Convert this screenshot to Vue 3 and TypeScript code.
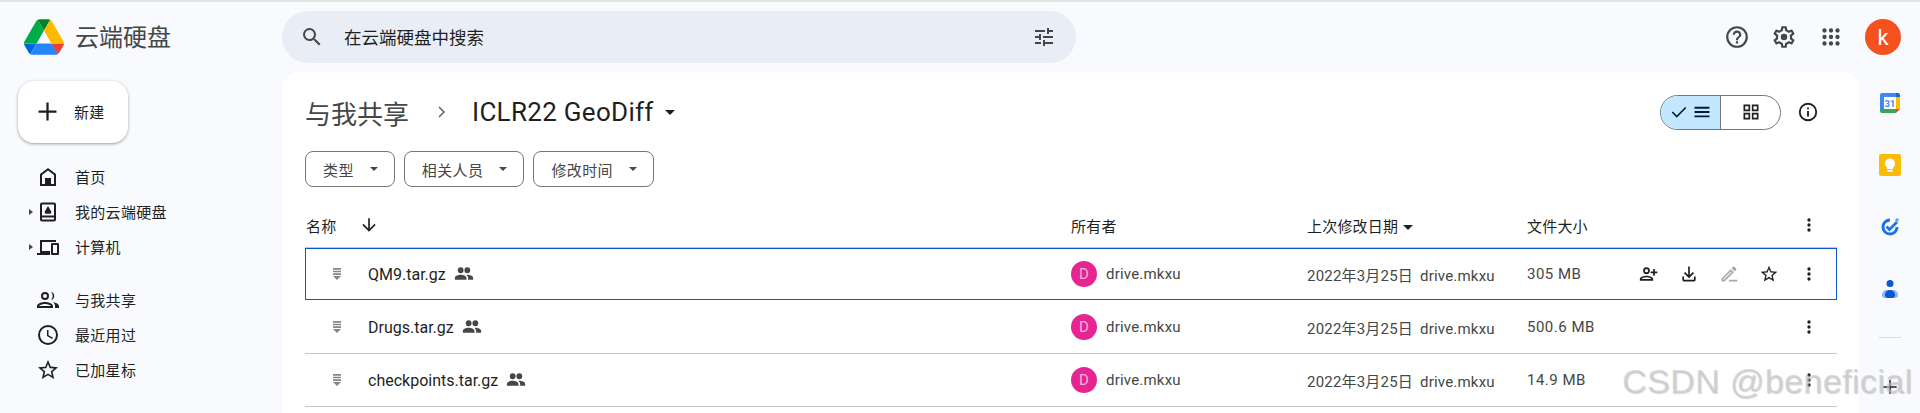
<script setup lang="ts">
const navTop = [
  { label: "首页", icon: "home", arrow: false },
  { label: "我的云端硬盘", icon: "drive", arrow: true },
  { label: "计算机", icon: "computer", arrow: true },
]
const navBottom = [
  { label: "与我共享", icon: "people" },
  { label: "最近用过", icon: "clock" },
  { label: "已加星标", icon: "star" },
]
const filters = ["类型", "相关人员", "修改时间"]
const files = [
  { name: "QM9.tar.gz", size: "305 MB", active: true },
  { name: "Drugs.tar.gz", size: "500.6 MB", active: false },
  { name: "checkpoints.tar.gz", size: "14.9 MB", active: false },
]
const paths: Record<string, string> = {
  home: "M12 3 4 9v12h16V9l-8-6zm6 16h-3v-6H9v6H6v-9l6-4.500 6 4.500v9z",
  drive: "M6 2.500h12a2 2 0 0 1 2 2v15a2 2 0 0 1-2 2H6a2 2 0 0 1-2-2v-15a2 2 0 0 1 2-2zM6 4.500v11h12v-11H6zM6 17.500v2h12v-2H6zM12 6l-3.500 6 1 1.700h5l1-1.700L12 6z",
  computer: "M4 5h16v2H6v9h8v4H1v-2h3V5zm12 3h6a1 1 0 0 1 1 1v10a1 1 0 0 1-1 1h-6a1 1 0 0 1-1-1V9a1 1 0 0 1 1-1zm1 2v8h4v-8h-4z",
  people: "M9 12a4 4 0 1 0 0-8 4 4 0 0 0 0 8zm0-6a2 2 0 1 1 0 4 2 2 0 0 1 0-4zm0 8c-2.700 0-8 1.300-8 4v2h16v-2c0-2.700-5.300-4-8-4zm-6 4c.2-.7 3.300-2 6-2s5.800 1.300 6 2H3zm12.100-13.900a4 4 0 0 1 0 7.800A6 6 0 0 0 15.100 4.100zM17 14c2 .6 6 1.700 6 4v2h-4v-2c0-1.600-.8-3-2-4z",
  clock: "M12 2a10 10 0 1 0 0 20 10 10 0 0 0 0-20zm0 18a8 8 0 1 1 0-16 8 8 0 0 1 0 16zm.5-13H11v6l5.200 3.100.8-1.300-4.500-2.600V7z",
  star: "M22 9.240l-7.190-.62L12 2 9.190 8.630 2 9.240l5.460 4.730L5.820 21 12 17.270 18.180 21l-1.630-7.030L22 9.240zM12 15.400l-3.760 2.270 1-4.280-3.320-2.880 4.380-.38L12 6.100l1.710 4.040 4.380.38-3.320 2.880 1 4.280L12 15.400z",
  addPerson: "M9 12a4 4 0 1 0 0-8 4 4 0 0 0 0 8zm0-6a2 2 0 1 1 0 4 2 2 0 0 1 0-4zm0 8c-2.700 0-8 1.300-8 4v2h16v-2c0-2.700-5.300-4-8-4zm-6 4c.2-.7 3.300-2 6-2s5.800 1.300 6 2H3zM19 9V6h-2v3h-3v2h3v3h2v-3h3V9h-3z",
  download: "M13 3h-2v10.200L7.400 9.600 6 11l6 6 6-6-1.400-1.400-3.600 3.600V3zM4 15v4a2 2 0 0 0 2 2h12a2 2 0 0 0 2-2v-4h-2v4H6v-4H4z",
  pencil: "M3 17.250V21h3.750L17.810 9.940l-3.750-3.750L3 17.250zM5.920 19H5v-.92l9.060-9.060.92.92L5.920 19zM20.710 7.040a1 1 0 0 0 0-1.410l-2.340-2.340a1 1 0 0 0-1.410 0l-1.830 1.830 3.750 3.750 1.830-1.830zM13 19h9v2h-11z",
  more: "M12 8a2 2 0 1 0 0-4 2 2 0 0 0 0 4zm0 2a2 2 0 1 0 0 4 2 2 0 0 0 0-4zm0 6a2 2 0 1 0 0 4 2 2 0 0 0 0-4z",
  shared: "M16 11a3.500 3.500 0 1 0 0-7 3.500 3.500 0 0 0 0 7zM8 11a3.500 3.500 0 1 0 0-7 3.500 3.500 0 0 0 0 7zm0 2c-2.700 0-7 1.300-7 4v2h14v-2c0-2.700-4.300-4-7-4zm8 0c-.3 0-.7 0-1.100.1 1.300.9 2.100 2.200 2.100 3.900v2h6v-2c0-2.700-4.300-4-7-4z",
  zipped: "M6 3h12v2.500H6V3zm0 4h12v2.500H6V7zm0 4h12v2.500H6V11zm0 4h12l-6 6-6-6z",
}
</script>

<template>
  <div class="page">
    <header class="topbar">
      <div class="brand">
        <svg class="drive-logo" viewBox="0 0 87.300 78" width="40" height="36">
          <path d="m6.600 66.850 3.850 6.650c.8 1.400 1.950 2.500 3.300 3.300l13.750-23.800H0c0 1.550.4 3.100 1.200 4.500z" fill="#0066da" />
          <path d="M43.650 25 29.900 1.200c-1.350.8-2.500 1.900-3.300 3.300L1.200 48.500A9 9 0 0 0 0 53h27.500z" fill="#00ac47" />
          <path d="M73.550 76.800c1.350-.8 2.500-1.900 3.300-3.300l1.600-2.750L86.100 57.500c.8-1.400 1.200-2.950 1.200-4.500H59.800l5.850 11.500z" fill="#ea4335" />
          <path d="M43.650 25 57.400 1.200C56.050.4 54.500 0 52.900 0H34.400c-1.600 0-3.150.45-4.500 1.200z" fill="#00832d" />
          <path d="M59.800 53H27.500L13.750 76.800c1.350.8 2.900 1.200 4.500 1.200h50.800c1.600 0 3.150-.45 4.500-1.200z" fill="#2684fc" />
          <path d="M73.400 26.500 60.700 4.500c-.8-1.400-1.950-2.500-3.300-3.300L43.650 25 59.800 53h27.450c0-1.550-.4-3.100-1.200-4.500z" fill="#ffba00" />
        </svg>
        <span class="brand-name">云端硬盘</span>
      </div>
      <div class="search">
        <svg viewBox="0 0 24 24" width="24" height="24"><path d="M15.500 14h-.79l-.28-.27A6.470 6.470 0 0 0 16 9.500 6.500 6.500 0 1 0 9.500 16c1.610 0 3.090-.59 4.230-1.570l.27.28v.79l5 4.990L20.490 19l-4.990-5zm-6 0C7.010 14 5 11.990 5 9.500S7.010 5 9.500 5 14 7.010 14 9.500 11.990 14 9.500 14z" /></svg>
        <span class="search-text">在云端硬盘中搜索</span>
        <svg viewBox="0 0 24 24" width="24" height="24"><path d="M3 17v2h6v-2H3zM3 5v2h10V5H3zm10 16v-2h8v-2h-8v-2h-2v6h2zM7 9v2H3v2h4v2h2V9H7zm14 4v-2H11v2h10zm-6-4h2V7h4V5h-4V3h-2v6z" /></svg>
      </div>
      <div class="top-actions">
        <svg viewBox="0 0 24 24"><path d="M11 18h2v-2h-2v2zm1-16a10 10 0 1 0 0 20 10 10 0 0 0 0-20zm0 18a8 8 0 1 1 0-16 8 8 0 0 1 0 16zm0-14a4 4 0 0 0-4 4h2a2 2 0 1 1 4 0c0 2-3 1.750-3 5h2c0-2.250 3-2.500 3-5a4 4 0 0 0-4-4z" /></svg>
        <svg viewBox="0 0 24 24"><path d="M19.430 12.980c.04-.32.07-.64.07-.98 0-.34-.03-.66-.07-.98l2.110-1.650c.19-.15.24-.42.12-.64l-2-3.460a.5.5 0 0 0-.61-.22l-2.490 1c-.52-.4-1.080-.73-1.690-.98l-.38-2.650A.488.488 0 0 0 14 2h-4c-.25 0-.46.18-.49.42l-.38 2.650c-.61.25-1.170.59-1.690.98l-2.490-1a.566.566 0 0 0-.18-.03c-.17 0-.34.09-.43.25l-2 3.460c-.13.22-.07.49.12.64l2.110 1.650c-.04.32-.07.65-.07.98 0 .33.03.66.07.98l-2.110 1.650c-.19.15-.24.42-.12.64l2 3.460a.5.5 0 0 0 .61.22l2.490-1c.52.4 1.080.73 1.690.98l.38 2.650c.03.24.24.42.49.42h4c.25 0 .46-.18.49-.42l.38-2.650c.61-.25 1.170-.59 1.690-.98l2.490 1c.06.02.12.03.18.03.17 0 .34-.09.43-.25l2-3.460c.12-.22.07-.49-.12-.64l-2.110-1.650zm-1.980-1.710c.04.31.05.52.05.73 0 .21-.02.43-.05.73l-.14 1.130.89.7 1.080.84-.7 1.210-1.270-.51-1.040-.42-.9.68c-.43.32-.84.56-1.250.73l-1.060.43-.16 1.130-.2 1.350h-1.400l-.19-1.350-.16-1.130-1.060-.43c-.43-.18-.83-.41-1.230-.71l-.91-.7-1.060.43-1.270.51-.7-1.210 1.080-.84.89-.7-.14-1.130c-.03-.31-.05-.54-.05-.74s.02-.43.05-.73l.14-1.130-.89-.7-1.080-.84.7-1.210 1.270.51 1.040.42.9-.68c.43-.32.84-.56 1.250-.73l1.060-.43.16-1.130.2-1.350h1.390l.19 1.350.16 1.130 1.060.43c.43.18.83.41 1.230.71l.91.7 1.060-.43 1.270-.51.7 1.210-1.070.85-.89.7.14 1.130z" /><circle cx="12" cy="12" r="3" /></svg>
        <svg viewBox="0 0 24 24"><path d="M6 8a2 2 0 1 0 0-4 2 2 0 0 0 0 4zm6 0a2 2 0 1 0 0-4 2 2 0 0 0 0 4zm6 0a2 2 0 1 0 0-4 2 2 0 0 0 0 4zM6 14a2 2 0 1 0 0-4 2 2 0 0 0 0 4zm6 0a2 2 0 1 0 0-4 2 2 0 0 0 0 4zm6 0a2 2 0 1 0 0-4 2 2 0 0 0 0 4zM6 20a2 2 0 1 0 0-4 2 2 0 0 0 0 4zm6 0a2 2 0 1 0 0-4 2 2 0 0 0 0 4zm6 0a2 2 0 1 0 0-4 2 2 0 0 0 0 4z" /></svg>
        <span class="avatar">k</span>
      </div>
    </header>

    <div class="body">
      <aside class="sidebar">
        <button type="button" class="new-btn">
          <svg viewBox="0 0 24 24" width="27" height="27"><path d="M20 13h-7v7h-2v-7H4v-2h7V4h2v7h7v2z" /></svg>
          <span>新建</span>
        </button>
        <nav class="nav">
          <div v-for="item in navTop" :key="item.label" class="nav-item">
            <span class="nav-arrow" :class="{ shown: item.arrow }"></span>
            <svg viewBox="0 0 24 24" width="24" height="24"><path :d="paths[item.icon]" fill-rule="evenodd" /></svg>
            <span>{{ item.label }}</span>
          </div>
        </nav>
        <nav class="nav second">
          <div v-for="item in navBottom" :key="item.label" class="nav-item">
            <span class="nav-arrow"></span>
            <svg viewBox="0 0 24 24" width="24" height="24"><path :d="paths[item.icon]" /></svg>
            <span>{{ item.label }}</span>
          </div>
        </nav>
      </aside>

      <main class="panel">
        <div class="title-row">
          <span class="crumb">与我共享</span>
          <svg class="crumb-sep" viewBox="0 0 24 24" width="24" height="24"><path d="M10 7l5 5-5 5" fill="none" stroke="#5f6368" stroke-width="1.500" /></svg>
          <span class="folder">ICLR22 GeoDiff</span>
          <span class="caret folder-caret"></span>
          <div class="view-tools">
            <div class="view-toggle">
              <span class="view-list">
                <svg viewBox="0 0 24 24" width="18" height="18"><path d="M3 12l6 6L21 6" fill="none" stroke="#001d35" stroke-width="2.200" /></svg>
                <svg viewBox="0 0 24 24" width="18" height="18"><path d="M2 5h20v2.500H2zM2 10.800h20v2.500H2zM2 16.500h20V19H2z" fill="#001d35" /></svg>
              </span>
              <span class="view-grid">
                <svg viewBox="0 0 24 24" width="20" height="20"><path d="M3 3h8v8H3V3zm2 2v4h4V5H5zm8-2h8v8h-8V3zm2 2v4h4V5h-4zM3 13h8v8H3v-8zm2 2v4h4v-4H5zm8-2h8v8h-8v-8zm2 2v4h4v-4h-4z" fill-rule="evenodd" /></svg>
              </span>
            </div>
            <svg class="info" viewBox="0 0 24 24" width="22" height="22"><path d="M11 7h2v2h-2V7zm0 4h2v6h-2v-6zm1-9a10 10 0 1 0 0 20 10 10 0 0 0 0-20zm0 18a8 8 0 1 1 0-16 8 8 0 0 1 0 16z" /></svg>
          </div>
        </div>

        <div class="filters">
          <button v-for="f in filters" :key="f" type="button" class="chip">
            <span>{{ f }}</span>
            <span class="caret chip-caret"></span>
          </button>
        </div>

        <div class="table">
          <div class="row head">
            <div class="col-name">
              <span>名称</span>
              <svg class="sort" viewBox="0 0 24 24" width="20" height="20"><path d="M20 12l-1.400-1.400-5.600 5.600V4h-2v12.200l-5.600-5.600L4 12l8 8 8-8z" /></svg>
            </div>
            <div class="col-owner">所有者</div>
            <div class="col-date">上次修改日期<span class="caret head-caret"></span></div>
            <div class="col-size">文件大小</div>
            <div class="col-actions">
              <svg viewBox="0 0 24 24" width="20" height="20"><path :d="paths.more" /></svg>
            </div>
          </div>
          <div v-for="file in files" :key="file.name" class="row file" :class="{ active: file.active }">
            <div class="col-name">
              <svg class="file-icon" viewBox="0 0 24 24" width="16" height="16"><path :d="paths.zipped" /></svg>
              <span class="file-name">{{ file.name }}</span>
              <svg class="shared" viewBox="0 0 24 24" width="20" height="20"><path :d="paths.shared" /></svg>
            </div>
            <div class="col-owner owner">
              <span class="owner-badge">D</span>
              <span>drive.mkxu</span>
            </div>
            <div class="col-date muted">
              <span class="date">2022年3月25日</span>
              <span>drive.mkxu</span>
            </div>
            <div class="col-size muted">{{ file.size }}</div>
            <div class="col-actions">
              <template v-if="file.active">
                <svg viewBox="0 0 24 24" width="20" height="20"><path :d="paths.addPerson" /></svg>
                <svg viewBox="0 0 24 24" width="20" height="20"><path :d="paths.download" /></svg>
                <svg class="disabled" viewBox="0 0 24 24" width="20" height="20"><path :d="paths.pencil" fill-rule="evenodd" /></svg>
                <svg viewBox="0 0 24 24" width="20" height="20"><path :d="paths.star" /></svg>
              </template>
              <svg viewBox="0 0 24 24" width="20" height="20"><path :d="paths.more" /></svg>
            </div>
          </div>
        </div>
      </main>

      <aside class="rail">
        <svg viewBox="0 0 24 24" width="24" height="24">
          <rect x="2" y="2" width="20" height="20" rx="2" fill="#fff" />
          <path d="M2 4a2 2 0 0 1 2-2h14v4H6v12H2z" fill="#4285f4" />
          <path d="M18 2h2a2 2 0 0 1 2 2v2h-4z" fill="#1967d2" />
          <path d="M18 6h4v12h-4z" fill="#fbbc04" />
          <path d="M2 18h16v4H4a2 2 0 0 1-2-2z" fill="#34a853" />
          <path d="M18 18h4l-4 4z" fill="#ea4335" />
          <text x="12" y="15.500" text-anchor="middle" class="cal-text">31</text>
        </svg>
        <svg viewBox="0 0 24 24" width="24" height="24">
          <path d="M3 1h18a2 2 0 0 1 2 2v18a2 2 0 0 1-2 2H3a2 2 0 0 1-2-2V3a2 2 0 0 1 2-2z" fill="#fbbc04" />
          <path d="M12 5.500a5 5 0 0 0-3 9V16h6v-1.500a5 5 0 0 0-3-9zM9.500 17h5v1.800h-5z" fill="#fff" />
        </svg>
        <svg viewBox="0 0 24 24" width="24" height="24">
          <path d="M12 3.500a8.500 8.500 0 1 0 8.500 8.500h-3a5.500 5.500 0 1 1-5.500-5.500z" fill="#1a73e8" />
          <path d="M8.500 11.500 11.500 14.500 19 7" fill="none" stroke="#1a73e8" stroke-width="2.800" />
          <circle cx="19" cy="5" r="1.800" fill="#669df6" />
        </svg>
        <svg viewBox="0 0 24 24" width="24" height="24">
          <circle cx="12" cy="6.500" r="3.500" fill="#0b57d0" />
          <path d="M4 18a5 5 0 0 1 5-5h6a5 5 0 0 1 5 5 3 3 0 0 1-3 3H7a3 3 0 0 1-3-3z" fill="#8ab4f8" />
          <path d="M7 18a5 5 0 0 1 5-5 5 5 0 0 1 5 5 3 3 0 0 1-3 3h-4a3 3 0 0 1-3-3z" fill="#0b57d0" />
        </svg>
        <div class="rail-line"></div>
        <svg class="rail-plus" viewBox="0 0 24 24" width="20" height="20"><path d="M20 13h-7v7h-2v-7H4v-2h7V4h2v7h7v2z" /></svg>
      </aside>
    </div>

    <div class="watermark">CSDN @beneficial</div>
  </div>
</template>

<style>
html,
body {
  margin: 0;
  background: #f8fafd;
  overflow: hidden;
}
</style>

<style scoped>
.page {
  position: relative;
  width: 1920px;
  height: 413px;
  overflow: hidden;
  box-sizing: border-box;
  border-top: 2px solid #e3e3e3;
  background: #f8fafd;
  font-family: Roboto, "Noto Sans CJK SC", sans-serif;
  color: #1f1f1f;
}

svg {
  fill: #444746;
  flex: none;
  display: block;
}

.topbar {
  display: flex;
  align-items: center;
  height: 70px;
}

.brand {
  display: flex;
  align-items: center;
  width: 282px;
  padding-left: 24px;
  box-sizing: border-box;
}

.brand-name {
  margin: 0 0 3px 11px;
  font-size: 24px;
  color: #444746;
}

.search {
  display: flex;
  align-items: center;
  width: 794px;
  height: 52px;
  padding: 0 20px 0 18px;
  box-sizing: border-box;
  border-radius: 26px;
  background: #e9eef6;
}

.search-text {
  margin: 0 0 2px 20px;
  flex: 1;
  font-size: 17.500px;
}

.top-actions {
  display: flex;
  align-items: center;
  margin-left: auto;
  padding-right: 19px;
  gap: 21px;
}

.top-actions svg {
  width: 26px;
  height: 26px;
}

.avatar {
  display: flex;
  align-items: center;
  justify-content: center;
  width: 36px;
  height: 36px;
  border-radius: 50%;
  background: #f4511e;
  color: #fff;
  font-size: 22px;
}

.body {
  display: flex;
  height: 341px;
}

.sidebar {
  width: 283px;
  flex: none;
  padding-top: 9px;
  box-sizing: border-box;
  font-size: 15px;
  letter-spacing: 0.3px;
}

.new-btn {
  display: flex;
  align-items: center;
  gap: 13px;
  width: 110px;
  height: 62px;
  margin: 0 0 0 18px;
  padding: 0 0 2px 16px;
  border: 0;
  border-radius: 16px;
  background: #fff;
  box-shadow: 0 1px 2px rgb(60 64 67 / 30%), 0 1px 3px 1px rgb(60 64 67 / 15%);
  font: inherit;
  letter-spacing: inherit;
  color: #1f1f1f;
}

.new-btn svg {
  fill: #1f1f1f;
}

.nav {
  margin-top: 16px;
  padding-left: 29px;
}

.nav.second {
  margin-top: 18px;
}

.nav-item {
  display: flex;
  align-items: center;
  height: 35px;
}

.nav-item svg {
  margin: 0 15px 0 3px;
  fill: #1f1f1f;
}

.nav-arrow {
  width: 4px;
  height: 7px;
}

.nav-arrow.shown {
  border-left: 4px solid #444746;
  border-top: 3.500px solid transparent;
  border-bottom: 3.500px solid transparent;
  width: 0;
  height: 0;
}

.panel {
  width: 1576px;
  flex: none;
  padding-left: 22px;
  box-sizing: border-box;
  border-radius: 16px 16px 0 0;
  background: #fff;
}

.title-row {
  display: flex;
  align-items: center;
  height: 79px;
  padding-top: 1px;
  box-sizing: border-box;
}

.crumb {
  font-size: 26px;
  color: #444746;
}

.crumb-sep {
  margin: 0 19px 0 20px;
}

.folder {
  font-size: 26px;
  letter-spacing: 0.3px;
  color: #1f1f1f;
}

.caret {
  display: inline-block;
  width: 0;
  height: 0;
  border-left: 5px solid transparent;
  border-right: 5px solid transparent;
  border-top: 5px solid #444746;
}

.folder-caret {
  margin-left: 11px;
  border-top-color: #1f1f1f;
}

.view-tools {
  display: flex;
  align-items: center;
  margin-left: auto;
  margin-right: 40px;
  gap: 16px;
}

.view-toggle {
  display: flex;
  width: 121px;
  height: 35px;
  box-sizing: border-box;
  border: 1px solid #747775;
  border-radius: 18px;
  overflow: hidden;
}

.view-list {
  display: flex;
  align-items: center;
  justify-content: center;
  gap: 5px;
  width: 59px;
  background: #c2e7ff;
  border-right: 1px solid #747775;
}

.view-grid {
  display: flex;
  flex: 1;
  align-items: center;
  justify-content: center;
}

.view-grid svg,
.info {
  fill: #1f1f1f;
}

.filters {
  display: flex;
  gap: 9px;
}

.chip {
  display: flex;
  align-items: center;
  gap: 16px;
  height: 36px;
  padding: 0 16px 0 17px;
  border: 1px solid #747775;
  border-radius: 8px;
  background: #fff;
  font: inherit;
  font-size: 15px;
  letter-spacing: 0.4px;
  color: #444746;
}

.chip-caret {
  border-left-width: 4px;
  border-right-width: 4px;
  border-top-width: 4px;
}

.table {
  margin-top: 16px;
  width: 1532px;
  font-size: 15px;
  letter-spacing: 0.2px;
}

.row {
  display: flex;
  align-items: center;
  box-sizing: border-box;
}

.head {
  height: 45px;
  border-bottom: 1px solid #c7c7c7;
}

.file {
  height: 53px;
  border-bottom: 1px solid #c7c7c7;
}

.file.active {
  border-bottom-color: transparent;
  box-shadow: inset 0 0 0 1px #0b57d0;
}

.col-name {
  display: flex;
  align-items: center;
  width: 766px;
  flex: none;
  padding-left: 1px;
  box-sizing: border-box;
}

.sort {
  margin-left: 23px;
  fill: #1f1f1f;
}

.file-icon {
  margin-left: 23px;
  fill: #80868b;
}

.file-name {
  margin-left: 23px;
  font-size: 16px;
  letter-spacing: 0;
  color: #1f1f1f;
}

.shared {
  margin-left: 8px;
}

.col-owner {
  width: 236px;
  flex: none;
}

.owner {
  display: flex;
  align-items: center;
  gap: 9px;
  color: #444746;
}

.owner-badge {
  display: flex;
  align-items: center;
  justify-content: center;
  width: 26px;
  height: 26px;
  border-radius: 50%;
  background: #e52592;
  color: rgb(255 255 255 / 65%);
  font-size: 15px;
}

.col-date {
  width: 220px;
  flex: none;
  white-space: nowrap;
}

.date {
  margin-right: 7px;
}

.muted {
  color: #444746;
}

.head-caret {
  margin-left: 5px;
  vertical-align: 2px;
  border-top-color: #1f1f1f;
}

.col-size {
  width: 105px;
  flex: none;
  white-space: nowrap;
}

.file .col-size {
  letter-spacing: 0.5px;
}

.col-actions {
  display: flex;
  flex: 1;
  align-items: center;
  justify-content: flex-end;
  gap: 20px;
  padding-right: 18px;
}

.col-actions svg {
  fill: #1f1f1f;
}

.col-actions svg.disabled {
  fill: #a8a8a8;
}

.rail {
  display: flex;
  flex: 1;
  flex-direction: column;
  align-items: center;
  gap: 38px;
  padding-top: 19px;
}

.cal-text {
  font-size: 9px;
  font-weight: 700;
  fill: #4285f4;
}

.rail-line {
  width: 22px;
  height: 1px;
  margin-top: -2px;
  background: #dadce0;
}

.rail-plus {
  margin-top: 1px;
  fill: #1f1f1f;
}

.watermark {
  position: absolute;
  left: 1622px;
  top: 360px;
  font-family: "Liberation Sans", sans-serif;
  font-size: 34px;
  letter-spacing: 0.4px;
  color: rgb(200 200 200 / 65%);
  text-shadow: 1px 1px 1px rgb(120 120 120 / 30%);
  white-space: nowrap;
}
</style>
